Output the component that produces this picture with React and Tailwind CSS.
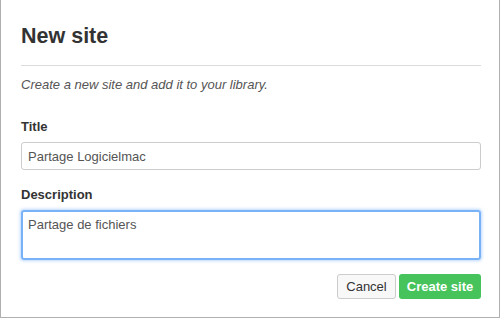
import React from "react";

export default function App() {
  return (
    <div className="w-[502px] h-[319px] bg-white font-['Liberation_Sans',Arial,sans-serif] text-[#333]">
      <div className="w-[500px] h-[318px] border-x border-b border-[#b0b0b0] pl-[20px] pr-[18px] flex flex-col">
        <h1 className="mt-[24px] text-[21.5px] leading-[24px] font-bold pb-[17px] border-b border-[#dcdcdc]">
          New site
        </h1>
        <p className="mt-[10px] text-[13px] leading-[18px] italic text-[#555]">
          Create a new site and add it to your library.
        </p>
        <label className="mt-[24px] text-[13px] leading-[18px] font-bold">Title</label>
        <input
          readOnly
          value="Partage Logicielmac"
          className="mt-[6px] h-[28px] w-full border border-[#ccc] rounded-[3px] px-[6px] text-[13px] text-[#555] outline-none"
        />
        <label className="mt-[16px] text-[13px] leading-[18px] font-bold">Description</label>
        <textarea
          readOnly
          value="Partage de fichiers"
          className="mt-[6px] h-[50px] w-full resize-none border-2 border-[#7ab2f8] rounded-[3px] px-[5px] pt-[4px] text-[13px] leading-[18px] text-[#555] outline-none shadow-[0_0_3px_1px_rgba(120,180,255,0.5)]"
        />
        <div className="mt-[14px] flex justify-end gap-[3px]">
          <button className="h-[25px] w-[59px] border border-[#ccc] rounded-[3px] bg-[#f8f8f8] text-[13px] text-[#333]">
            Cancel
          </button>
          <button className="h-[25px] w-[82px] rounded-[3px] bg-[#46c35b] text-[13px] font-bold text-white">
            Create site
          </button>
        </div>
      </div>
    </div>
  );
}
